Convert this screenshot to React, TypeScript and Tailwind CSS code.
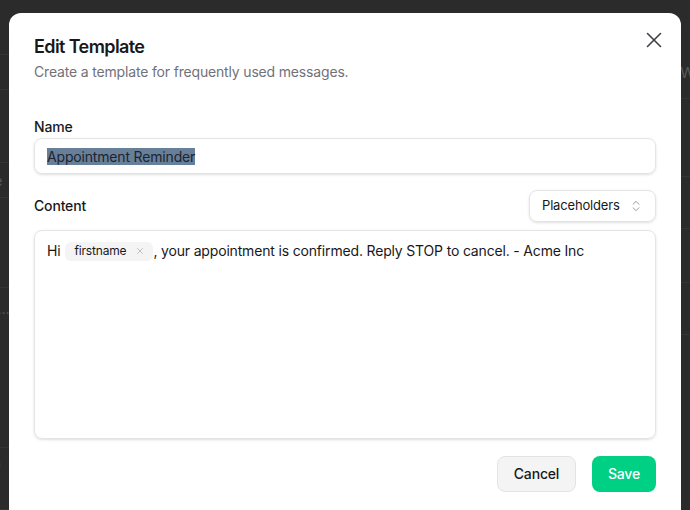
import { X, ChevronsUpDown } from 'lucide-react';

const leftRows = [
  { h: 'h-[55px]', text: '', cls: 'items-center' },
  { h: 'h-[35px]', text: '', cls: 'items-center' },
  { h: 'h-[73px]', text: 'Acc', cls: 'items-start pt-[7px]' },
  { h: 'h-[35px]', text: 'Sale', cls: 'items-center' },
  { h: 'h-[90px]', text: '', cls: 'items-center' },
  { h: 'h-[160px]', text: 'Not...', cls: 'items-start pt-[10px]' },
  { h: 'h-[62px]', text: '$40', cls: 'items-start pt-[6px]' },
];

const rightRows = ['h-[99px]', 'h-[78px]', 'h-[52px]', 'h-[54px]', 'h-[52px]'];

const App = () => {
  return (
    <div
      className="relative w-[690px] h-[510px] overflow-hidden bg-[#2b2b2b]"
      style={{ fontFamily: 'Inter, "Noto Sans", sans-serif' }}
    >
      {/* page behind the overlay */}
      <div className="flex h-full text-[14px] text-[#5a5a5a]">
        <div className="w-[300px] flex flex-col">
          {leftRows.map((row, i) => (
            <div key={i} className={`${row.h} ${row.cls} border-b border-[#353535] flex -ml-[26px]`}>
              {row.text}
            </div>
          ))}
        </div>
        <div className="flex-1 flex flex-col">
          {rightRows.map((h, i) => (
            <div key={i} className={`${h} border-b border-[#353535] flex justify-end`}>
              {i === 0 && <span className="mt-[62px] -mr-[14px] text-[15px]">Wh</span>}
            </div>
          ))}
        </div>
      </div>

      {/* dialog */}
      <div className="absolute left-[9px] top-[13px] w-[672px] h-[520px] bg-white rounded-xl px-[25px] pt-[25px] text-[#18181b] tracking-[-0.17px]">
        <button className="absolute right-[14px] top-[14px] text-[#3f3f46]">
          <X size={26} strokeWidth={1.5} />
        </button>

        <div className="flex flex-col gap-1.5">
          <h2 className="text-lg font-semibold leading-none tracking-[-0.6px]">Edit Template</h2>
          <p className="text-sm text-[#71717a]">Create a template for frequently used messages.</p>
        </div>

        <div className="mt-[38px] flex flex-col">
          <label className="text-sm font-medium leading-none">Name</label>
          <div className="mt-1 h-9 rounded-lg border border-[#e4e4e7] shadow-sm px-3 flex items-center text-sm">
            <span className="bg-[#687f99] text-[#1c2430] leading-[17px]">Appointment Reminder</span>
          </div>

          <div className="mt-4 flex items-center justify-between">
            <label className="text-sm font-medium leading-none">Content</label>
            <button className="h-8 w-[127px] rounded-lg border border-[#e4e4e7] shadow-sm pl-3 pr-3 flex items-center justify-between text-[13px]">
              Placeholders
              <ChevronsUpDown size={14} strokeWidth={1.5} className="text-[#8a8a92]" />
            </button>
          </div>

          <div className="mt-2 h-[209px] rounded-lg border border-[#e4e4e7] shadow-sm px-3 pt-[10px] text-sm">
            <div className="flex items-center leading-5">
              <span>Hi</span>
              <span className="ml-[5px] h-[19px] rounded-md bg-[#f4f4f5] pl-[9px] pr-[8px] flex items-center gap-[9px] text-xs">
                firstname
                <X size={10} strokeWidth={1.5} className="text-[#9ca3af]" />
              </span>
              <span>, your appointment is confirmed. Reply STOP to cancel. - Acme Inc</span>
            </div>
          </div>

          <div className="mt-[17px] flex justify-end gap-4">
            <button className="h-9 w-[79px] rounded-lg border border-[#e4e4e7] bg-[#f4f4f5] text-sm font-medium">
              Cancel
            </button>
            <button className="h-9 w-[64px] rounded-lg bg-[#00d084] text-white text-sm font-medium">
              Save
            </button>
          </div>
        </div>
      </div>
    </div>
  );
};

export default App;
